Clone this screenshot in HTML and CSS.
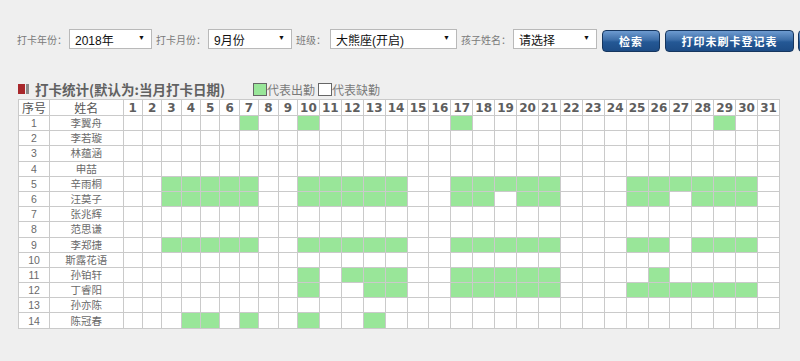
FILE: index.html
```html
<!DOCTYPE html>
<html lang="zh-CN">
<head>
<meta charset="utf-8">
<title>打卡统计</title>
<link rel="stylesheet" href="styles.css">
</head>
<body>
<div class="page">
  <div class="toolbar">
    <span class="label first">打卡年份：</span>
    <div class="select w83"><span>2018年</span><span class="arrow">▼</span></div>
    <span class="label">打卡月份：</span>
    <div class="select w84"><span>9月份</span><span class="arrow">▼</span></div>
    <span class="label wide">班级：</span>
    <div class="select w127"><span>大熊座(开启)</span><span class="arrow">▼</span></div>
    <span class="label">孩子姓名：</span>
    <div class="select w84"><span>请选择</span><span class="arrow">▼</span></div>
    <button class="btn b58">检索</button>
    <button class="btn b129">打印未刷卡登记表</button>
    <button class="btn b80" aria-label="导出"></button>
  </div>

  <div class="titlebar">
    <span class="mark"><span class="mark-red"></span><span class="mark-grey"></span></span>
    <span class="title">打卡统计(默认为:当月打卡日期)</span>
    <span class="legend"><span class="box green"></span>代表出勤<span class="box white"></span>代表缺勤</span>
  </div>

  <table class="grid">
    <colgroup>
      <col class="c-no"><col class="c-name">
      <col class="c-d1"><col class="c-d1"><col class="c-d1"><col class="c-d1"><col class="c-d1"><col class="c-d1"><col class="c-d1"><col class="c-d1"><col class="c-d1">
      <col><col><col><col><col><col><col><col><col><col><col><col><col><col><col><col><col><col><col><col><col><col>
    </colgroup>
    <thead>
      <tr><th class="cjk">序号</th><th class="cjk">姓名</th><th>1</th><th>2</th><th>3</th><th>4</th><th>5</th><th>6</th><th>7</th><th>8</th><th>9</th><th>10</th><th>11</th><th>12</th><th>13</th><th>14</th><th>15</th><th>16</th><th>17</th><th>18</th><th>19</th><th>20</th><th>21</th><th>22</th><th>23</th><th>24</th><th>25</th><th>26</th><th>27</th><th>28</th><th>29</th><th>30</th><th>31</th></tr>
    </thead>
    <tbody>
      <tr><td>1</td><td>李翼舟</td><td></td><td></td><td></td><td></td><td></td><td></td><td class="g"></td><td></td><td></td><td class="g"></td><td></td><td></td><td></td><td></td><td></td><td></td><td class="g"></td><td></td><td></td><td></td><td></td><td></td><td></td><td></td><td></td><td></td><td></td><td></td><td class="g"></td><td></td><td></td></tr>
      <tr><td>2</td><td>李若璇</td><td></td><td></td><td></td><td></td><td></td><td></td><td></td><td></td><td></td><td></td><td></td><td></td><td></td><td></td><td></td><td></td><td></td><td></td><td></td><td></td><td></td><td></td><td></td><td></td><td></td><td></td><td></td><td></td><td></td><td></td><td></td></tr>
      <tr><td>3</td><td>林蕴涵</td><td></td><td></td><td></td><td></td><td></td><td></td><td></td><td></td><td></td><td></td><td></td><td></td><td></td><td></td><td></td><td></td><td></td><td></td><td></td><td></td><td></td><td></td><td></td><td></td><td></td><td></td><td></td><td></td><td></td><td></td><td></td></tr>
      <tr><td>4</td><td>申喆</td><td></td><td></td><td></td><td></td><td></td><td></td><td></td><td></td><td></td><td></td><td></td><td></td><td></td><td></td><td></td><td></td><td></td><td></td><td></td><td></td><td></td><td></td><td></td><td></td><td></td><td></td><td></td><td></td><td></td><td></td><td></td></tr>
      <tr><td>5</td><td>辛雨桐</td><td></td><td></td><td class="g"></td><td class="g"></td><td class="g"></td><td class="g"></td><td class="g"></td><td></td><td></td><td class="g"></td><td class="g"></td><td class="g"></td><td class="g"></td><td class="g"></td><td></td><td></td><td class="g"></td><td class="g"></td><td class="g"></td><td class="g"></td><td class="g"></td><td></td><td></td><td></td><td class="g"></td><td class="g"></td><td class="g"></td><td class="g"></td><td class="g"></td><td class="g"></td><td></td></tr>
      <tr><td>6</td><td>汪莫子</td><td></td><td></td><td class="g"></td><td class="g"></td><td class="g"></td><td class="g"></td><td class="g"></td><td></td><td></td><td class="g"></td><td class="g"></td><td class="g"></td><td class="g"></td><td class="g"></td><td></td><td></td><td class="g"></td><td class="g"></td><td></td><td class="g"></td><td class="g"></td><td></td><td></td><td></td><td class="g"></td><td class="g"></td><td></td><td class="g"></td><td class="g"></td><td class="g"></td><td></td></tr>
      <tr><td>7</td><td>张兆辉</td><td></td><td></td><td></td><td></td><td></td><td></td><td></td><td></td><td></td><td></td><td></td><td></td><td></td><td></td><td></td><td></td><td></td><td></td><td></td><td></td><td></td><td></td><td></td><td></td><td></td><td></td><td></td><td></td><td></td><td></td><td></td></tr>
      <tr><td>8</td><td>范思谦</td><td></td><td></td><td></td><td></td><td></td><td></td><td></td><td></td><td></td><td></td><td></td><td></td><td></td><td></td><td></td><td></td><td></td><td></td><td></td><td></td><td></td><td></td><td></td><td></td><td></td><td></td><td></td><td></td><td></td><td></td><td></td></tr>
      <tr><td>9</td><td>李郑捷</td><td></td><td></td><td class="g"></td><td class="g"></td><td class="g"></td><td class="g"></td><td class="g"></td><td></td><td></td><td class="g"></td><td class="g"></td><td class="g"></td><td class="g"></td><td class="g"></td><td></td><td></td><td class="g"></td><td class="g"></td><td class="g"></td><td class="g"></td><td class="g"></td><td></td><td></td><td></td><td class="g"></td><td class="g"></td><td></td><td class="g"></td><td class="g"></td><td class="g"></td><td></td></tr>
      <tr><td>10</td><td>斯露花语</td><td></td><td></td><td></td><td></td><td></td><td></td><td></td><td></td><td></td><td></td><td></td><td></td><td></td><td></td><td></td><td></td><td></td><td></td><td></td><td></td><td></td><td></td><td></td><td></td><td></td><td></td><td></td><td></td><td></td><td></td><td></td></tr>
      <tr><td>11</td><td>孙铂轩</td><td></td><td></td><td></td><td></td><td></td><td></td><td></td><td></td><td></td><td class="g"></td><td></td><td class="g"></td><td class="g"></td><td class="g"></td><td></td><td></td><td class="g"></td><td class="g"></td><td class="g"></td><td class="g"></td><td class="g"></td><td></td><td></td><td></td><td></td><td class="g"></td><td></td><td></td><td></td><td></td><td></td></tr>
      <tr><td>12</td><td>丁睿阳</td><td></td><td></td><td></td><td></td><td></td><td></td><td></td><td></td><td></td><td class="g"></td><td></td><td></td><td class="g"></td><td class="g"></td><td></td><td></td><td class="g"></td><td class="g"></td><td class="g"></td><td class="g"></td><td class="g"></td><td></td><td></td><td></td><td class="g"></td><td class="g"></td><td class="g"></td><td class="g"></td><td class="g"></td><td class="g"></td><td></td></tr>
      <tr><td>13</td><td>孙亦陈</td><td></td><td></td><td></td><td></td><td></td><td></td><td></td><td></td><td></td><td></td><td></td><td></td><td></td><td></td><td></td><td></td><td></td><td></td><td></td><td></td><td></td><td></td><td></td><td></td><td></td><td></td><td></td><td></td><td></td><td></td><td></td></tr>
      <tr><td>14</td><td>陈冠春</td><td></td><td></td><td></td><td class="g"></td><td class="g"></td><td></td><td class="g"></td><td></td><td></td><td class="g"></td><td></td><td></td><td class="g"></td><td></td><td></td><td></td><td></td><td></td><td></td><td></td><td></td><td></td><td></td><td></td><td></td><td></td><td></td><td></td><td></td><td></td><td></td></tr>
    </tbody>
  </table>
</div>
</body>
</html>
```
FILE: styles.css
```css
html, body {
  margin: 0;
  padding: 0;
}
body {
  width: 800px;
  height: 361px;
  overflow: hidden;
  background: #efefef;
  font-family: "Liberation Sans", "Noto Sans CJK SC", sans-serif;
}
.page {
  padding: 29px 0 0 17px;
}
.toolbar {
  display: flex;
  align-items: flex-start;
  white-space: nowrap;
  height: 23px;
}
.label {
  flex: none;
  font-family: "Noto Sans CJK SC", sans-serif;
  font-size: 10px;
  color: #7a7a7a;
  line-height: 20px;
  margin: 1px 2px 0 4px;
}
.label.first {
  margin-left: 0;
}
.label.wide {
  margin-right: 4px;
}
.select {
  box-sizing: border-box;
  height: 20px;
  border: 1px solid #b9b9b9;
  background: #fff;
  display: flex;
  justify-content: space-between;
  align-items: center;
  padding: 0 6px 0 5px;
  font-size: 12px;
  color: #111;
  flex: none;
}
.arrow {
  font-size: 7px;
  color: #111;
  margin-top: -3px;
}
.w83 { width: 83px; }
.w84 { width: 84px; }
.w127 { width: 127px; }
.btn {
  box-sizing: border-box;
  flex: none;
  height: 22px;
  margin: 1px 0 0 5px;
  padding: 0;
  border: 1px solid #16365f;
  border-radius: 4px;
  background: linear-gradient(#6e9bd0 0%, #3d6ea8 45%, #245895 55%, #1d4c86 100%);
  color: #fff;
  font-family: "Noto Sans CJK SC", sans-serif;
  font-size: 11px;
  font-weight: bold;
  letter-spacing: 1px;
  line-height: 20px;
  text-align: center;
}
.b58 { width: 58px; }
.b129 { width: 129px; }
.b80 { width: 80px; margin-left: 4px; }

.titlebar {
  display: flex;
  align-items: center;
  height: 20px;
  margin-top: 27px;
}
.mark {
  display: flex;
  gap: 1px;
  margin-left: 1px;
}
.mark-red {
  width: 7px;
  height: 10px;
  background: #a8282c;
}
.mark-grey {
  width: 3px;
  height: 10px;
  background: #8a8a8a;
}
.title {
  margin-left: 6px;
  font-family: "Noto Sans CJK SC", sans-serif;
  font-size: 13.5px;
  font-weight: bold;
  color: #616161;
}
.legend {
  display: flex;
  align-items: center;
  margin-left: 28px;
  font-family: "Noto Sans CJK SC", sans-serif;
  font-size: 12px;
  color: #7a7a7a;
}
.box {
  box-sizing: border-box;
  width: 14px;
  height: 13px;
  border: 1px solid #666;
}
.box.green {
  background: #99e699;
}
.box.white {
  background: #fff;
  margin-left: 3px;
}

.grid {
  margin-left: 1px;
  width: 762px;
  table-layout: fixed;
  border-collapse: collapse;
  background: #fff;
}
.c-no { width: 31px; }
.c-name { width: 73.5px; }
.c-d1 { width: 19.4px; }
.grid th, .grid td {
  border: 1px solid #cacaca;
  padding: 0;
  text-align: center;
  overflow: hidden;
  white-space: nowrap;
}
.grid th {
  height: 15px;
  font-family: "DejaVu Sans", "Noto Sans CJK SC", sans-serif;
  font-size: 12px;
  font-weight: bold;
  color: #5e5e5e;
  line-height: 14px;
}
.grid th.cjk {
  font-family: "Noto Sans CJK SC", sans-serif;
  font-weight: normal;
  color: #555;
}
.grid td {
  height: 14.2px;
  font-family: "Liberation Sans", "Noto Sans CJK SC", sans-serif;
  font-size: 10.5px;
  color: #6a6a6a;
  line-height: 14px;
}
.grid td.g {
  background: #99e699;
}
```
